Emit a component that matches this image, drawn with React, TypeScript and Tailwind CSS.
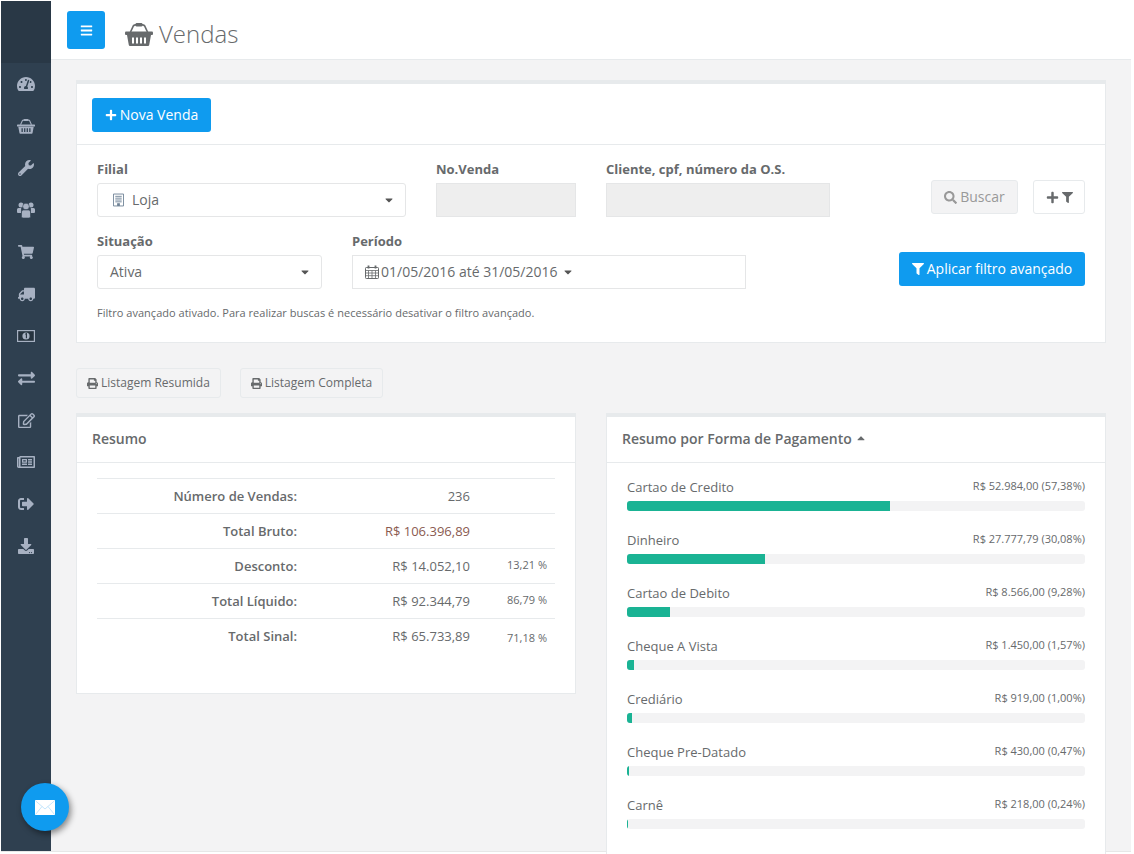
import { ReactNode } from "react";
import {
  FaBars,
  FaCaretDown,
  FaCaretUp,
  FaDownload,
  FaExchangeAlt,
  FaFilter,
  FaPlus,
  FaPrint,
  FaRegEdit,
  FaRegNewspaper,
  FaSearch,
  FaShoppingCart,
  FaSignOutAlt,
  FaTachometerAlt,
  FaTruck,
  FaWrench,
} from "react-icons/fa";

// icons from the old font-awesome set, the package has no close match
function BasketIcon({ className }: { className?: string }) {
  return (
    <svg viewBox="0 0 28 24" className={className} fill="currentColor">
      <path d="M5.500 10 8.300 4Q8.900 2.800 10.200 2.800H17.800Q19.100 2.800 19.700 4L22.500 10" fill="none" stroke="currentColor" strokeWidth="1.700" />
      <rect x="10.500" y="1" width="7" height="3.400" rx="1.200" />
      <rect x="0" y="9.500" width="28" height="3.400" rx="1" />
      <path
        fillRule="evenodd"
        d="M2 13H26L24.200 23Q24 24 23 24H5Q4 24 3.800 23ZM7 15.500H9V21.500H7ZM11 15.500H13V21.500H11ZM15 15.500H17V21.500H15ZM19 15.500H21V21.500H19Z"
      />
    </svg>
  );
}

function UsersIcon({ className }: { className?: string }) {
  return (
    <svg viewBox="0 0 18 16" className={className} fill="currentColor">
      <circle cx="4" cy="3" r="2.500" />
      <circle cx="14" cy="3" r="2.500" />
      <path d="M0 10V7.500Q0 6 1.500 6H4.200L4 11H1Q0 11 0 10ZM18 10V7.500Q18 6 16.500 6H13.800L14 11H17Q18 11 18 10Z" />
      <circle cx="9" cy="4.500" r="3.300" stroke="#2f4050" strokeWidth="0.600" />
      <path d="M4.500 14.500V10Q4.500 8 6.500 8H11.500Q13.500 8 13.500 10V14.500Q13.500 16 12 16H6Q4.500 16 4.500 14.500Z" stroke="#2f4050" strokeWidth="0.600" />
    </svg>
  );
}

function MoneyIcon({ className }: { className?: string }) {
  return (
    <svg viewBox="0 0 18 12" className={className}>
      <rect width="18" height="12" fill="currentColor" />
      <rect x="1.200" y="1.200" width="15.600" height="9.600" fill="#26333f" />
      <circle cx="9" cy="6" r="3.600" fill="currentColor" />
      <path d="M8.300 4.200 9.400 3.700V8.300" fill="none" stroke="#26333f" strokeWidth="1.100" />
    </svg>
  );
}

function CalendarIcon({ className }: { className?: string }) {
  return (
    <svg viewBox="0 0 14 14" className={className} fill="none" stroke="currentColor">
      <rect x="0.500" y="2.500" width="13" height="11" rx="0.800" strokeWidth="1" />
      <path d="M0.500 5.500H13.500M0.500 8H13.500M0.500 10.700H13.500M3.500 5.500V13.500M7 5.500V13.500M10.500 5.500V13.500" strokeWidth="0.800" />
      <path d="M3.500 0.500V3.500M10.500 0.500V3.500" strokeWidth="1.800" />
    </svg>
  );
}

function BuildingIcon({ className }: { className?: string }) {
  return (
    <svg viewBox="0 0 12 14" className={className} fill="none" stroke="currentColor">
      <path d="M0.500 13.500V0.500H11.500V13.500Z" strokeWidth="1" />
      <path d="M2.500 3H9.500M2.500 5H9.500M2.500 7H9.500M2.500 9H9.500" strokeWidth="1" />
      <rect x="4.500" y="10.500" width="3" height="3" fill="currentColor" stroke="none" />
    </svg>
  );
}

function MailIcon({ className }: { className?: string }) {
  return (
    <svg viewBox="0 0 20 15" className={className}>
      <rect width="20" height="15" rx="0.500" fill="#ffffff" />
      <path d="M0.500 0.800 10 9 19.500 0.800M0.500 14.500 7 6.500M19.500 14.500 13 6.500" fill="none" stroke="#b5defa" strokeWidth="0.800" />
    </svg>
  );
}

const menu = [
  <FaTachometerAlt className="text-[18px]" />,
  <BasketIcon className="w-[18px] h-[16px]" />,
  <FaWrench className="text-[16px]" />,
  <UsersIcon className="w-[18px] h-[16px]" />,
  <FaShoppingCart className="text-[16px]" />,
  <FaTruck className="text-[17px] -scale-x-100" />,
  <MoneyIcon className="w-[18px] h-[12px]" />,
  <FaExchangeAlt className="text-[17px]" />,
  <FaRegEdit className="text-[17px]" />,
  <FaRegNewspaper className="text-[18px]" />,
  <FaSignOutAlt className="text-[16px]" />,
  <FaDownload className="text-[16px]" />,
];

const resumo = [
  { label: "Número de Vendas:", value: "236", pct: "", pctClass: "" },
  { label: "Total Bruto:", value: "R$ 106.396,89", pct: "", pctClass: "", red: true },
  { label: "Desconto:", value: "R$ 14.052,10", pct: "13,21 %", pctClass: "pb-[2px]" },
  { label: "Total Líquido:", value: "R$ 92.344,79", pct: "86,79 %", pctClass: "pb-[2px]" },
  { label: "Total Sinal:", value: "R$ 65.733,89", pct: "71,18 %", pctClass: "pt-[4px]" },
];

const pagamentos = [
  { nome: "Cartao de Credito", valor: "R$ 52.984,00 (57,38%)", pct: 57.38 },
  { nome: "Dinheiro", valor: "R$ 27.777,79 (30,08%)", pct: 30.08 },
  { nome: "Cartao de Debito", valor: "R$ 8.566,00 (9,28%)", pct: 9.28 },
  { nome: "Cheque A Vista", valor: "R$ 1.450,00 (1,57%)", pct: 1.57 },
  { nome: "Crediário", valor: "R$ 919,00 (1,00%)", pct: 1.0 },
  { nome: "Cheque Pre-Datado", valor: "R$ 430,00 (0,47%)", pct: 0.47 },
  { nome: "Carnê", valor: "R$ 218,00 (0,24%)", pct: 0.24 },
];

function Field({ label, className, children }: { label: string; className: string; children: ReactNode }) {
  return (
    <div className={className}>
      <p className="text-[13px] leading-[18px] font-bold mb-[5px]">{label}</p>
      {children}
    </div>
  );
}

function SelectBox({ children }: { children: ReactNode }) {
  return (
    <div className="h-[34px] bg-white border border-[#e5e6e7] rounded-[3px] flex items-center justify-between pl-3 pr-[10px] text-[14px]">
      <span className="pb-[2px] flex items-center">{children}</span>
      <FaCaretDown className="text-[12px] text-[#555]" />
    </div>
  );
}

function ListButton({ label }: { label: string }) {
  return (
    <button className="h-[30px] pl-[10px] pr-[10px] border border-[#e7eaec] rounded-[3px] bg-[#f3f3f4] flex items-center gap-[3px] text-[12px] text-[#676a6c]">
      <FaPrint className="text-[11px]" />
      {label}
    </button>
  );
}

export default function App() {
  return (
    <div className="w-[1134px] h-[854px] overflow-hidden bg-white pt-px pl-px pr-[3px] pb-[2px] font-['Open_Sans',sans-serif] text-[#676a6c]">
      <div className="flex h-full bg-[#f3f3f4] border-b border-[#e7e7e7]">
        <aside className="relative w-[50px] shrink-0 bg-[#2f4050]">
          <div className="h-[62px] bg-[#293846]" />
          <nav className="flex flex-col items-center">
            {menu.map((icon, i) => (
              <div key={i} className="h-[42px] flex items-center justify-center text-[#a7b1c2]">
                {icon}
              </div>
            ))}
          </nav>
          <button className="absolute left-[20px] top-[782px] w-[48px] h-[48px] rounded-full bg-[#0f9bef] shadow-[2px_3px_6px_rgba(0,0,0,0.45)] flex items-center justify-center z-10">
            <MailIcon className="w-[20px] h-[15px]" />
          </button>
        </aside>

        <main className="flex-1 min-w-0">
          <header className="h-[59px] bg-white border-b border-[#e7eaec] flex items-center pl-4">
            <button className="w-[38px] h-[38px] rounded-[3px] bg-[#0f9bef] text-white text-[13px] flex items-center justify-center">
              <FaBars />
            </button>
            <BasketIcon className="ml-5 w-[28px] h-[24px] mt-[8px] text-[#676a6c]" />
            <h1 className="ml-[6px] mt-[8px] text-[24px] font-light leading-none">Vendas</h1>
          </header>

          <div className="pl-[25px] pr-[25px] pt-[20px]">
            <section className="bg-white border-t-4 border-[#e7eaec] border-x border-b h-[263px]">
              <div className="h-[61px] border-b border-[#e7eaec] pl-[15px] pt-[14px]">
                <button className="h-[34px] w-[119px] pb-[2px] rounded-[3px] bg-[#0f9bef] text-white text-[14px] flex items-center justify-center gap-[3px]">
                  <FaPlus className="text-[12px] mt-[2px]" />
                  Nova Venda
                </button>
              </div>
              <div className="pl-[20px] pr-[20px] pt-[15px]">
                <div className="flex h-[72px]">
                  <Field label="Filial" className="w-[309px]">
                    <SelectBox>
                      <BuildingIcon className="w-[11px] h-[14px] mr-[8px] ml-[3px] mt-[2px] text-[#6f8296]" />
                      Loja
                    </SelectBox>
                  </Field>
                  <Field label="No.Venda" className="w-[140px] ml-[30px]">
                    <div className="h-[34px] bg-[#eeeeee] border border-[#e5e6e7]" />
                  </Field>
                  <Field label="Cliente, cpf, número da O.S." className="w-[224px] ml-[30px]">
                    <div className="h-[34px] bg-[#eeeeee] border border-[#e5e6e7]" />
                  </Field>
                  <div className="ml-auto flex gap-[15px] pt-[20px]">
                    <button className="h-[34px] w-[87px] pb-[2px] rounded-[3px] border border-[#e7eaec] bg-[#f3f3f4] text-[#999] text-[14px] flex items-center justify-center gap-[3px]">
                      <FaSearch className="text-[13px] mt-[2px]" />
                      Buscar
                    </button>
                    <button className="h-[34px] w-[52px] rounded-[3px] border border-[#e7eaec] bg-white text-[#676a6c] text-[13px] flex items-center justify-center gap-[3px]">
                      <FaPlus />
                      <FaFilter className="text-[11px]" />
                    </button>
                  </div>
                </div>
                <div className="flex h-[72px]">
                  <Field label="Situação" className="w-[225px]">
                    <SelectBox>Ativa</SelectBox>
                  </Field>
                  <Field label="Período" className="w-[394px] ml-[30px]">
                    <div className="h-[34px] border border-[#e5e6e7] flex items-center pl-3 pb-[2px] gap-[2px] text-[14px]">
                      <CalendarIcon className="w-[14px] h-[14px] mt-[2px]" />
                      01/05/2016 até 31/05/2016
                      <FaCaretDown className="text-[12px] ml-[2px] mt-[2px] text-[#555]" />
                    </div>
                  </Field>
                  <div className="ml-auto pt-[20px]">
                    <button className="h-[34px] w-[186px] pb-[2px] rounded-[3px] bg-[#0f9bef] text-white text-[14px] flex items-center justify-center gap-[3px]">
                      <FaFilter className="text-[12px] mt-[2px]" />
                      Aplicar filtro avançado
                    </button>
                  </div>
                </div>
                <p className="text-[11px] leading-[16px] mt-[1px] tracking-[0.023px]">
                  Filtro avançado ativado. Para realizar buscas é necessário desativar o filtro avançado.
                </p>
              </div>
            </section>

            <div className="flex gap-[19px] mt-[25px]">
              <ListButton label="Listagem Resumida" />
              <ListButton label="Listagem Completa" />
            </div>

            <div className="flex gap-[30px] mt-[15px] items-start">
              <section className="w-[500px] h-[281px] bg-white border-t-4 border-x border-b border-[#e7eaec]">
                <h2 className="h-[46px] pb-[3px] border-b border-[#e7eaec] pl-[15px] flex items-center text-[14px] font-semibold">
                  Resumo
                </h2>
                <div className="mx-[20px] mt-[15px] border-t border-[#e7eaec]">
                  {resumo.map((r) => (
                    <div
                      key={r.label}
                      className="flex items-center h-[35px] first:h-[34px] border-t border-[#e7eaec] first:border-t-0 text-[13px]"
                    >
                      <span className="w-[200px] text-right font-semibold pt-[2px]">{r.label}</span>
                      <span className={`w-[173px] text-right pt-[2px] ${r.red ? "text-[#8a5a50]" : ""}`}>{r.value}</span>
                      <span className={`w-[77px] text-right text-[11px] ${r.pctClass}`}>{r.pct}</span>
                    </div>
                  ))}
                </div>
              </section>

              <section className="w-[500px] h-[470px] bg-white border-t-4 border-x border-[#e7eaec]">
                <h2 className="h-[46px] pb-[3px] border-b border-[#e7eaec] pl-[15px] flex items-center gap-[3px] text-[14px] font-semibold">
                  Resumo por Forma de Pagamento
                  <FaCaretUp className="text-[12px]" />
                </h2>
                <div className="px-[20px] pt-[14px]">
                  {pagamentos.map((p) => (
                    <div key={p.nome} className="h-[53px]">
                      <div className="flex items-center justify-between h-[18px] mb-[6px]">
                        <span className="text-[13px] pt-[4px]">{p.nome}</span>
                        <span className="text-[11px]">{p.valor}</span>
                      </div>
                      <div className="h-[10px] rounded-[3px] bg-[#f3f3f4] overflow-hidden">
                        <div className="h-full bg-[#1ab394]" style={{ width: `${p.pct}%` }} />
                      </div>
                    </div>
                  ))}
                </div>
              </section>
            </div>
          </div>
        </main>
      </div>
    </div>
  );
}
